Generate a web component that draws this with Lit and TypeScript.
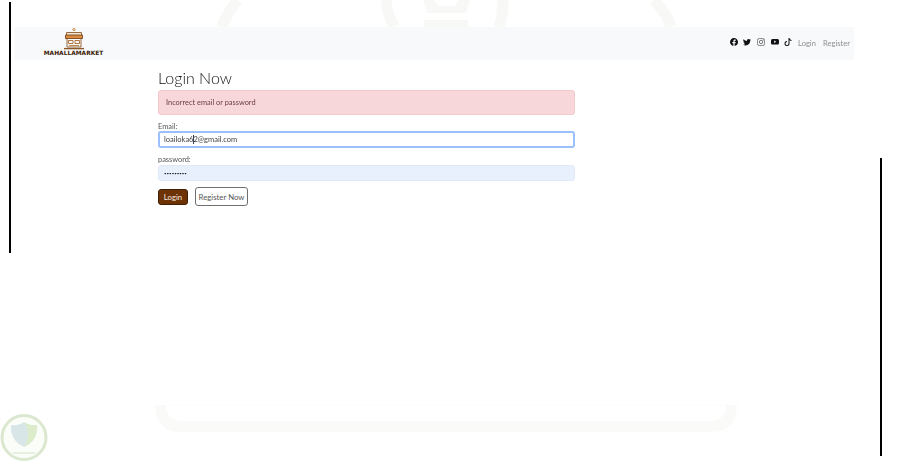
import { LitElement, html, css, svg } from "lit";
import { customElement } from "lit/decorators.js";

const ICONS = {
  fb: svg`<path d="M16 8.049c0-4.446-3.582-8.05-8-8.05C3.58 0-.002 3.603-.002 8.05c0 4.017 2.926 7.347 6.75 7.951v-5.625h-2.03V8.05H6.75V6.275c0-2.017 1.195-3.131 3.022-3.131.876 0 1.791.157 1.791.157v1.98h-1.009c-.993 0-1.303.621-1.303 1.258v1.51h2.218l-.354 2.326H9.25V16c3.824-.604 6.75-3.934 6.75-7.951z"/>`,
  tw: svg`<path d="M5.026 15c6.038 0 9.341-5.003 9.341-9.334 0-.14 0-.282-.006-.422A6.685 6.685 0 0 0 16 3.542a6.658 6.658 0 0 1-1.889.518 3.301 3.301 0 0 0 1.447-1.817 6.533 6.533 0 0 1-2.087.793A3.286 3.286 0 0 0 7.875 6.03a9.325 9.325 0 0 1-6.767-3.429 3.289 3.289 0 0 0 1.018 4.382A3.323 3.323 0 0 1 .64 6.575v.045a3.288 3.288 0 0 0 2.632 3.218 3.203 3.203 0 0 1-.865.115 3.23 3.23 0 0 1-.614-.057 3.283 3.283 0 0 0 3.067 2.277A6.588 6.588 0 0 1 .78 13.58a6.32 6.32 0 0 1-.78-.045A9.344 9.344 0 0 0 5.026 15z"/>`,
  ig: svg`<g fill="none" stroke="#555" stroke-width="1.5"><rect x=".8" y=".8" width="14.4" height="14.4" rx="4.2"/><circle cx="8" cy="8" r="3.4"/></g><circle cx="12.2" cy="3.8" r="1" fill="#555"/>`,
  yt: svg`<path d="M8.051 1.999h.089c.822.003 4.987.033 6.11.335a2.01 2.01 0 0 1 1.415 1.42c.101.38.172.883.22 1.402l.01.104.022.26.008.104c.065.914.073 1.77.074 1.957v.075c-.001.194-.01 1.108-.082 2.06l-.008.105-.009.104c-.05.572-.124 1.14-.235 1.558a2.007 2.007 0 0 1-1.415 1.42c-1.16.312-5.569.334-6.18.335h-.142c-.309 0-1.587-.006-2.927-.052l-.17-.006-.087-.004-.171-.007-.171-.007c-1.11-.049-2.167-.128-2.654-.26a2.007 2.007 0 0 1-1.415-1.419c-.111-.417-.185-.986-.235-1.558L.09 9.82l-.008-.104A31.4 31.4 0 0 1 0 7.68v-.123c.002-.215.01-.958.064-1.778l.007-.103.003-.052.008-.104.022-.26.01-.104c.048-.519.119-1.023.22-1.402a2.007 2.007 0 0 1 1.415-1.42c.487-.13 1.544-.21 2.654-.26l.17-.007.172-.006.086-.003.171-.007A99.788 99.788 0 0 1 7.858 2h.193zM6.4 5.209v4.818l4.157-2.408L6.4 5.209z"/>`,
  tt: svg`<path d="M9 0h1.98c.144.715.54 1.617 1.235 2.512C12.895 3.389 13.797 4 15 4v2c-1.753 0-3.07-.814-4-1.829V11a5 5 0 1 1-5-5v2a3 3 0 1 0 3 3V0Z"/>`,
};

@customElement("app-root")
export class AppRoot extends LitElement {
  static styles = css`
    :host {
      display: block;
      position: relative;
      width: 907px;
      height: 461px;
      overflow: hidden;
      background: #fff;
      font-family: "Lato", "Open Sans", sans-serif;
      color: #333;
    }
    .page {
      position: relative;
      display: flex;
      flex-direction: column;
      padding-top: 27px;
      filter: blur(0.3px);
    }
    .watermark {
      position: absolute;
      left: 0;
      top: 0;
    }
    .rule {
      position: absolute;
      width: 2px;
      background: #000;
    }
    .rule.left { left: 9px; top: 2px; height: 251px; }
    .rule.right { left: 880px; top: 158px; height: 298px; }
    .badge {
      position: absolute;
      left: 0;
      top: 414px;
      filter: blur(0.5px);
    }
    nav {
      display: flex;
      align-items: center;
      justify-content: space-between;
      box-sizing: border-box;
      margin-left: 14px;
      width: 840px;
      height: 33px;
      padding: 0 4px 2px 30px;
      background: #f8f9fa;
    }
    .brand {
      display: flex;
      flex-direction: column;
      align-items: center;
      width: 59px;
    }
    .brand svg { display: block; }
    .brand span {
      font-family: "DejaVu Sans", sans-serif;
      font-size: 5.9px;
      font-weight: 700;
      line-height: 7px;
      white-space: nowrap;
      color: #3a2006;
    }
    .links {
      display: flex;
      align-items: center;
    }
    .links svg {
      display: block;
      width: 8px;
      height: 8px;
      margin: 0 5.7px 1px 0;
      fill: #111;
    }
    .links a {
      font-size: 7.6px;
      color: #8f8f8f;
    }
    .links a + a { margin-left: 7px; }
    main {
      display: flex;
      flex-direction: column;
      box-sizing: border-box;
      margin-left: 158px;
      width: 417px;
      padding-top: 8px;
    }
    h1 {
      margin: 0;
      height: 22px;
      font-size: 16px;
      line-height: 19px;
      font-weight: 300;
      color: #111;
    }
    .alert {
      box-sizing: border-box;
      height: 25px;
      display: flex;
      align-items: center;
      padding: 0 7px 1px;
      background: #f8d7da;
      border: 1px solid #f5c8cc;
      border-radius: 3px;
      font-size: 7.4px;
      color: #6d3a42;
    }
    label {
      display: block;
      font-size: 7.4px;
      line-height: 9px;
      color: #555;
    }
    .email-label { margin-top: 7px; }
    .pass-label { margin-top: 7px; }
    .field { position: relative; }
    input {
      display: block;
      box-sizing: border-box;
      width: 100%;
      margin: 0;
      padding: 0 4px;
      font-family: inherit;
      font-size: 7.5px;
      color: #444;
      outline: none;
    }
    .email {
      height: 17px;
      background: #fff;
      border: 2px solid #9cc0fb;
      border-radius: 3px;
    }
    .pass {
      height: 16px;
      margin-top: 1px;
      padding: 0 5px;
      background: #e8f0fe;
      border: 1px solid #e2e9f6;
      border-radius: 3px;
      font-size: 4.4px;
      color: #222;
    }
    .caret {
      position: absolute;
      left: 35px;
      top: 4px;
      width: 1px;
      height: 9px;
      background: #33415c;
    }
    .actions {
      display: flex;
      align-items: center;
      gap: 7px;
      margin-top: 6px;
    }
    button {
      box-sizing: border-box;
      padding: 0;
      font-family: inherit;
      font-size: 7.8px;
      border-radius: 3px;
    }
    .primary {
      width: 30px;
      height: 16px;
      background: #6e3305;
      border: 1px solid #3f1f06;
      color: #f2ebe2;
    }
    .secondary {
      width: 53px;
      height: 19px;
      background: #fff;
      border: 1px solid #6f6f6f;
      color: #555;
    }
  `;

  render() {
    return html`
      <svg class="watermark" width="907" height="461" viewBox="0 0 907 461" fill="none">
        <g stroke="#f8f8f6" stroke-width="11">
          <path d="M222 27C225 17 231 8 238 0" />
          <path d="M386 0C387 10 390 19 394 27" />
          <path d="M503 0C503 10 502 19 499 27" />
          <path d="M654 0C662 8 668 17 671 27" />
        </g>
        <path d="M423 0H434L438 6H455L459 0H470L466 13H427Z M424 20H468V27H424Z" fill="#f8f8f6" />
        <path d="M155 405H166C166 416 172 421 184 421H708C720 421 726 416 726 405H737C737 422 728 432 710 432H182C164 432 155 422 155 405Z" fill="#fafaf8" />
        <path d="M166 405.5H726" stroke="#fcfcfb" />
      </svg>
      <div class="page">
        <nav>
          <div class="brand">
            <svg width="20" height="22" viewBox="0 0 20 22" fill="none" stroke="#8d5a2b" stroke-width="0.9">
              <circle cx="10" cy="1.6" r="1.1" stroke="#c77a2a" />
              <path d="M2.5 7V4.5H17.5V7" fill="#f3e8d8" />
              <path d="M1.5 7H18.5V10.5H1.5Z" fill="#d98a3e" stroke="#7b4a1d" />
              <path d="M3 10.5V19H17V10.5" />
              <path d="M4.5 12.5H9V15.5H4.5ZM11 12.5H15.5V15.5H11Z" stroke="#a8662b" />
              <path d="M5 17.5H15" stroke="#b77a3e" />
              <path d="M0 20.6H20" stroke="#8d5a2b" stroke-width="1.4" />
            </svg>
            <span>MAHALLAMARKET</span>
          </div>
          <div class="links">
            ${Object.values(ICONS).map(
              (p) => html`<svg viewBox="0 0 16 16">${p}</svg>`
            )}
            <a>Login</a>
            <a>Register</a>
          </div>
        </nav>
        <main>
          <h1>Login Now</h1>
          <div class="alert">Incorrect email or password</div>
          <label class="email-label">Email:</label>
          <div class="field">
            <input class="email" type="email" .value=${"loailoka62@gmail.com"} />
            <i class="caret"></i>
          </div>
          <label class="pass-label">password:</label>
          <input class="pass" type="password" .value=${"123456789"} />
          <div class="actions">
            <button class="primary">Login</button>
            <button class="secondary">Register Now</button>
          </div>
        </main>
      </div>
      <i class="rule left"></i>
      <i class="rule right"></i>
      <svg class="badge" width="48" height="47" viewBox="0 0 48 47" fill="none">
        <circle cx="24" cy="23.5" r="22" fill="#fbfdf8" stroke="#dbe8cf" stroke-width="3" />
        <path d="M11 11C17 12 21 10 24 8C27 10 31 12 37 11C38 21 33 29 24 33C15 29 10 21 11 11Z" fill="#d9e6e8" />
        <path d="M24 8C27 10 31 12 37 11C38 21 33 29 24 33C29 25 30 16 24 8Z" fill="#dcebc9" />
        <path d="M13 39H35" stroke="#e1ead8" stroke-width="1.5" />
      </svg>
    `;
  }
}
